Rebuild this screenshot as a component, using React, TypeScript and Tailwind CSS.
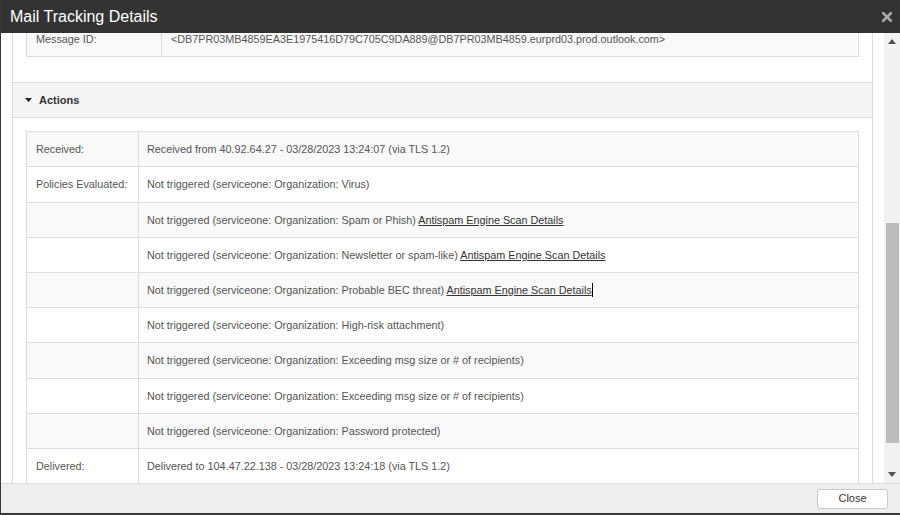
import React, { useLayoutEffect, useRef } from 'react';

type ActionRow = { label: string; text: string; link?: boolean; caret?: boolean };

const ACTIONS: ActionRow[] = [
  { label: 'Received:', text: 'Received from 40.92.64.27 - 03/28/2023 13:24:07 (via TLS 1.2)' },
  { label: 'Policies Evaluated:', text: 'Not triggered (serviceone: Organization: Virus)' },
  { label: '', text: 'Not triggered (serviceone: Organization: Spam or Phish)', link: true },
  { label: '', text: 'Not triggered (serviceone: Organization: Newsletter or spam-like)', link: true },
  { label: '', text: 'Not triggered (serviceone: Organization: Probable BEC threat)', link: true, caret: true },
  { label: '', text: 'Not triggered (serviceone: Organization: High-risk attachment)' },
  { label: '', text: 'Not triggered (serviceone: Organization: Exceeding msg size or # of recipients)' },
  { label: '', text: 'Not triggered (serviceone: Organization: Exceeding msg size or # of recipients)' },
  { label: '', text: 'Not triggered (serviceone: Organization: Password protected)' },
  { label: 'Delivered:', text: 'Delivered to 104.47.22.138 - 03/28/2023 13:24:18 (via TLS 1.2)' },
];

const Arrow = ({ down }: { down?: boolean }) => (
  <svg width="8" height="5" viewBox="0 0 8 5" className="block">
    <polygon points={down ? '0,0 8,0 4,5' : '0,5 8,5 4,0'} fill="#505050" />
  </svg>
);

export default function App() {
  const scrollRef = useRef<HTMLDivElement>(null);

  useLayoutEffect(() => {
    // dialog body is scrolled down a little in the screenshot
    if (scrollRef.current) scrollRef.current.scrollTop = 12;
  }, []);

  return (
    <div className="w-[900px] h-[515px] flex flex-col bg-white border-l border-b-2 border-[#3a3a3a] font-['Liberation_Sans',Arial,sans-serif] overflow-hidden">
      <header className="h-[33px] flex-none bg-[#333333] flex items-center justify-between pl-[9px] pr-[8px]">
        <h1 className="text-[16px] text-white leading-none">Mail Tracking Details</h1>
        <svg width="10" height="10" viewBox="0 0 10 10" className="block">
          <path d="M1 1L9 9M9 1L1 9" stroke="#a8a8a8" strokeWidth="2.6" strokeLinecap="square" />
        </svg>
      </header>

      <div className="flex-1 flex min-h-0">
        <div ref={scrollRef} className="flex-1 overflow-hidden px-[11px]">
          <div className="border-x border-b border-[#dddddd]">
            {/* previous section (scrolled out of view) */}
            <div className="px-[13px] pb-[25px]">
              <div className="border border-[#dddddd] bg-[#f9f9f9] text-[10.8px] text-[#555555]">
                <div className="flex">
                  <div className="w-[135px] border-r border-[#dddddd] px-[9px] py-[8px] leading-[18.2px]">Message ID:</div>
                  <div className="flex-1 px-[9px] py-[8px] leading-[18.2px]">
                    &lt;DB7PR03MB4859EA3E1975416D79C705C9DA889@DB7PR03MB4859.eurprd03.prod.outlook.com&gt;
                  </div>
                </div>
              </div>
            </div>

            <div className="h-[36px] border-y border-[#dddddd] bg-[#f5f5f5] flex items-center pl-[12px] gap-[7px]">
              <svg width="7" height="4" viewBox="0 0 7 4" className="block">
                <polygon points="0,0 7,0 3.5,4" fill="#222222" />
              </svg>
              <span className="text-[11px] font-bold text-[#333333]">Actions</span>
            </div>

            <div className="px-[13px] pt-[13px] pb-[13px]">
              <div className="border-t border-x border-[#dddddd] text-[10.8px] text-[#555555]">
                {ACTIONS.map((row, i) => (
                  <div key={i} className={`flex border-b border-[#dddddd] ${i % 2 === 0 ? 'bg-[#f9f9f9]' : 'bg-white'}`}>
                    <div className="w-[112px] flex-none border-r border-[#dddddd] px-[9px] py-[8px] leading-[18.2px]">
                      {row.label}
                    </div>
                    <div className="flex-1 px-[8px] py-[8px] leading-[18.2px] whitespace-nowrap">
                      {row.text}
                      {row.link && (
                        <>
                          {' '}
                          <a className="text-[#333333] underline">Antispam Engine Scan Details</a>
                        </>
                      )}
                      {row.caret && <span className="inline-block w-px h-[14px] bg-black align-middle -mt-[2px]" />}
                    </div>
                  </div>
                ))}
              </div>
            </div>
          </div>
        </div>

        {/* scrollbar */}
        <div className="w-[16px] flex-none bg-[#f1f1f1] flex flex-col">
          <div className="h-[17px] flex items-center justify-center">
            <Arrow />
          </div>
          <div className="h-[173px]" />
          <div className="h-[220px] ml-[2px] mr-[1px] bg-[#bcbcbc]" />
          <div className="flex-1" />
          <div className="h-[17px] flex items-center justify-center">
            <Arrow down />
          </div>
        </div>
      </div>

      <footer className="h-[30px] flex-none border-t border-[#dddddd] bg-[#eeeeee] flex items-center justify-end pr-[12px]">
        <button className="w-[71px] h-[20px] bg-white border border-[#c8c8c8] rounded-[3px] text-[11px] text-[#333333] leading-none">
          Close
        </button>
      </footer>
    </div>
  );
}
